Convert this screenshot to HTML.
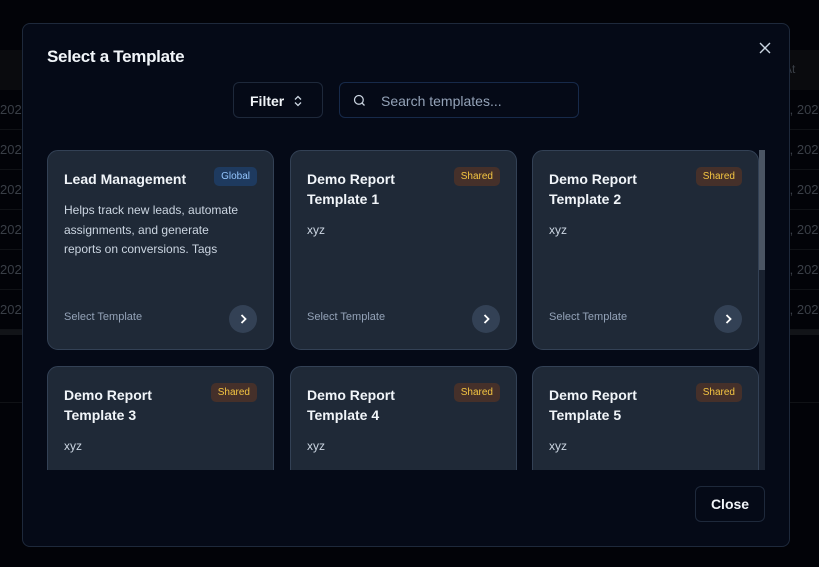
<!DOCTYPE html>
<html><head><style>
*{box-sizing:border-box;margin:0;padding:0}
body{width:819px;height:567px;background:#020308;font-family:"Liberation Sans",sans-serif;position:relative;overflow:hidden;color:#f1f5f9}
.bg{position:absolute;left:0;top:0;width:819px;height:567px;color:#3a3f47;font-size:13px}
.hdr{position:absolute;top:50px;left:0;width:819px;height:40px;background:#0a0b0e}
.row{position:absolute;left:0;width:819px;height:40px;border-bottom:1px solid #101216}
.row span{position:absolute;top:12px;white-space:nowrap}
.modal{position:absolute;left:22px;top:23px;width:768px;height:524px;background:#050a17;border:1px solid #1e293b;border-radius:8px;overflow:hidden}
h1{position:absolute;left:24px;top:23px;font-size:17px;font-weight:bold;letter-spacing:-0.3px}
.x{position:absolute;left:736px;top:18px}
.filter{position:absolute;left:210px;top:58px;width:90px;height:36px;border:1px solid #1e293b;border-radius:6px;font-size:14px;font-weight:bold;padding:10px 0 0 16px}
.search{position:absolute;left:316px;top:58px;width:240px;height:36px;border:1px solid #172a4a;border-radius:6px;font-size:14px;color:#94a3b8;padding:10px 0 0 41px}
.clip{position:absolute;left:0;top:126px;width:768px;height:320px;overflow:hidden}
.card{position:absolute;width:227px;height:200px;background:#1f2937;border:1px solid #334155;border-radius:11px;padding:18px 16px}
.t{font-size:14px;font-weight:bold;line-height:20px;width:140px}
.badge{position:absolute;right:16px;top:16px;font-size:10px;height:19px;line-height:19px;padding:0 7px;border-radius:5px}
.g{background:#1e3a5f;color:#93c5fd}
.s{background:#45302a;color:#f4c542}
.d{font-size:12px;color:#cbd5e1;line-height:19.5px;margin-top:12px;white-space:nowrap}
.sel{position:absolute;left:16px;top:160px;font-size:11px;color:#94a3b8}
.arr{position:absolute;right:16px;top:154px;width:28px;height:28px;border-radius:50%;background:#334155}
.sb{position:absolute;left:736px;top:126px;width:6px;height:320px;background:#1a2230}
.th{position:absolute;left:736px;top:126px;width:6px;height:120px;background:#4b5563}
.close{position:absolute;left:672px;top:462px;width:70px;height:36px;border:1px solid #1e293b;border-radius:6px;font-size:14px;font-weight:bold;text-align:center;line-height:34px}
</style></head><body>
<div class="hdr"></div>
<div class="bg">
<span style="position:absolute;left:784px;top:62px;font-size:12px">At</span>
<div class="row" style="top:90px"><span style="left:0">202</span><span style="left:786px">/, 202</span></div>
<div class="row" style="top:130px"><span style="left:0">202</span><span style="left:786px">/, 202</span></div>
<div class="row" style="top:170px"><span style="left:0">202</span><span style="left:786px">/, 202</span></div>
<div class="row" style="top:210px"><span style="left:0">202</span><span style="left:786px">/, 202</span></div>
<div class="row" style="top:250px"><span style="left:0">202</span><span style="left:786px">/, 202</span></div>
<div class="row" style="top:290px"><span style="left:0">202</span><span style="left:786px">/, 202</span></div>
<div style="position:absolute;top:330px;left:0;width:819px;height:5px;background:#121418"></div>
<div style="position:absolute;top:402px;left:0;width:819px;border-top:1px solid #101216"></div>
</div>
<div class="modal">
<h1>Select a Template</h1>
<svg class="x" width="12" height="12" viewBox="0 0 12 12" stroke="#cbd5e1" stroke-width="1.4"><path d="M1 1l10 10M11 1L1 11"/></svg>
<div class="filter">Filter <svg style="position:absolute;left:59px;top:12px" width="10" height="12" viewBox="0 0 10 12" fill="none" stroke="#cbd5e1" stroke-width="1.3"><path d="M2 4.5L5 1.5L8 4.5M2 7.5L5 10.5L8 7.5"/></svg></div>
<div class="search"><svg style="position:absolute;left:12px;top:10px" width="15" height="15" viewBox="0 0 24 24" fill="none" stroke="#cbd5e1" stroke-width="2"><circle cx="11" cy="11" r="7"/><path d="M20 20l-4-4"/></svg>Search templates...</div>
<div class="clip">
<div class="card" style="left:24px;top:0"><div class="t">Lead Management</div><span class="badge g">Global</span><div class="d">Helps track new leads, automate<br>assignments, and generate<br>reports on conversions. Tags</div><div class="sel">Select Template</div><div class="arr"><svg width="28" height="28" viewBox="0 0 28 28" fill="none" stroke="#fff" stroke-width="1.8"><path d="M12.5 10l4 4-4 4"/></svg></div></div>
<div class="card" style="left:267px;top:0"><div class="t">Demo Report Template 1</div><span class="badge s">Shared</span><div class="d">xyz</div><div class="sel">Select Template</div><div class="arr"><svg width="28" height="28" viewBox="0 0 28 28" fill="none" stroke="#fff" stroke-width="1.8"><path d="M12.5 10l4 4-4 4"/></svg></div></div>
<div class="card" style="left:509px;top:0"><div class="t">Demo Report Template 2</div><span class="badge s">Shared</span><div class="d">xyz</div><div class="sel">Select Template</div><div class="arr"><svg width="28" height="28" viewBox="0 0 28 28" fill="none" stroke="#fff" stroke-width="1.8"><path d="M12.5 10l4 4-4 4"/></svg></div></div>
<div class="card" style="left:24px;top:216px"><div class="t">Demo Report Template 3</div><span class="badge s">Shared</span><div class="d">xyz</div></div>
<div class="card" style="left:267px;top:216px"><div class="t">Demo Report Template 4</div><span class="badge s">Shared</span><div class="d">xyz</div></div>
<div class="card" style="left:509px;top:216px"><div class="t">Demo Report Template 5</div><span class="badge s">Shared</span><div class="d">xyz</div></div>
</div>
<div class="sb"></div><div class="th"></div>
<div class="close">Close</div>
</div>
</body></html>
